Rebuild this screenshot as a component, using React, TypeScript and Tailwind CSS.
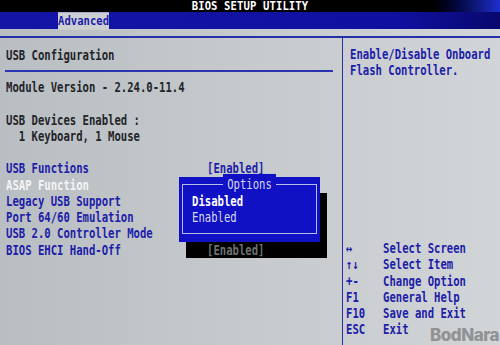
import React from "react";

const font = "font-['DejaVu_Sans_Mono','Liberation_Mono',monospace] text-[10.6px] font-bold";

const Line = ({ children, className = "" }: { children?: React.ReactNode; className?: string }) => (
  <div className={`h-[16.25px] leading-[16.25px] whitespace-pre scale-y-125 ${className}`}>{children}</div>
);

const items = [
  { label: "USB Functions", value: "[Enabled]", active: false },
  { label: "ASAP Function", value: "", active: true },
  { label: "Legacy USB Support", value: "", active: false },
  { label: "Port 64/60 Emulation", value: "", active: false },
  { label: "USB 2.0 Controller Mode", value: "", active: false },
  { label: "BIOS EHCI Hand-Off", value: "", active: false },
];

const keys = [
  ["↔", "Select Screen"],
  ["↑↓", "Select Item"],
  ["+-", "Change Option"],
  ["F1", "General Help"],
  ["F10", "Save and Exit"],
  ["ESC", "Exit"],
];

export default function App() {
  return (
    <div className={`relative w-[500px] h-[345px] overflow-hidden bg-gradient-to-r from-[#b9bec2] via-[#c6cacd] to-[#d2d5d7] ${font}`}>
      {/* title bar */}
      <div className="h-[12px] overflow-hidden bg-gradient-to-r from-black via-black via-85% to-[#1e2fd0] flex justify-center">
        <div className="text-white leading-[12px] scale-y-110 tracking-[0.1px]">BIOS SETUP UTILITY</div>
      </div>
      {/* tab bar */}
      <div className="h-[17px] bg-gradient-to-r from-[#1414a6] via-[#1010a0] via-80% to-[#08086e] flex">
        <div className="ml-[58px] mt-[1px] h-[16px] bg-[#cdd0d2] text-[#1c1ca8] leading-[16px] scale-y-110">Advanced</div>
      </div>
      <div className="h-[7px]" />
      <div className="h-[1.5px] bg-[#2630a8]" />

      <div className="flex h-[307px]">
        {/* left column */}
        <div className="relative w-[343px] border-r-[1.5px] border-[#2630a8] pt-[9px] pl-[6px] text-[#232428]">
          <Line>USB Configuration</Line>
          <div className="h-[16.25px] flex items-center pr-[9px] -ml-[1px]">
            <div className="h-[1.5px] w-full bg-[#2a34b0]" />
          </div>
          <Line>Module Version - 2.24.0-11.4</Line>
          <Line />
          <Line>USB Devices Enabled :</Line>
          <Line>{"  1 Keyboard, 1 Mouse"}</Line>
          <Line />
          {items.map((it) => (
            <div key={it.label} className="flex">
              <Line className={`w-[201px] ${it.active ? "text-[#f4f4f4]" : "text-[#1c20a8]"}`}>{it.label}</Line>
              <Line className="text-[#1c20a8]">{it.value}</Line>
            </div>
          ))}

          {/* popup shadow */}
          <div className="absolute left-[186px] top-[155px] w-[141px] h-[65px] bg-black pt-[49px] pl-[21px]">
            <Line className="text-[#6d7270]">[Enabled]</Line>
          </div>
          {/* popup */}
          <div className="absolute left-[179px] top-[139px] w-[141px] h-[65px] bg-[#1010c4] p-[3px] pt-[7px]">
            <div className="relative h-[50px] border border-[#b8bce8] pt-[8px] pl-[9px]">
              <div className="absolute -top-[9px] left-0 right-0 flex justify-center">
                <Line className="bg-[#1010c4] px-[4px] text-[#d4d6e4] font-normal">Options</Line>
              </div>
              <Line className="text-white">Disabled</Line>
              <Line className="text-[#d8dae8] font-normal">Enabled</Line>
            </div>
          </div>
        </div>

        {/* right column */}
        <div className="flex-1 flex flex-col pt-[8px] pb-[7px] text-[#1c20a8]">
          <div className="pl-[7px]">
            <Line>Enable/Disable Onboard</Line>
            <Line>Flash Controller.</Line>
          </div>
          <div className="mt-auto pl-[3px]">
            {keys.map(([k, d]) => (
              <div key={k} className="flex">
                <Line className="w-[37px]">{k}</Line>
                <Line>{d}</Line>
              </div>
            ))}
          </div>
        </div>
      </div>

      {/* watermark */}
      <div className="absolute right-[1px] bottom-[0px] font-['Inter',sans-serif] text-[17px] font-extrabold tracking-[-0.5px] text-[#8a8c8e] opacity-90 leading-[20px]">
        BodNara
      </div>
    </div>
  );
}
